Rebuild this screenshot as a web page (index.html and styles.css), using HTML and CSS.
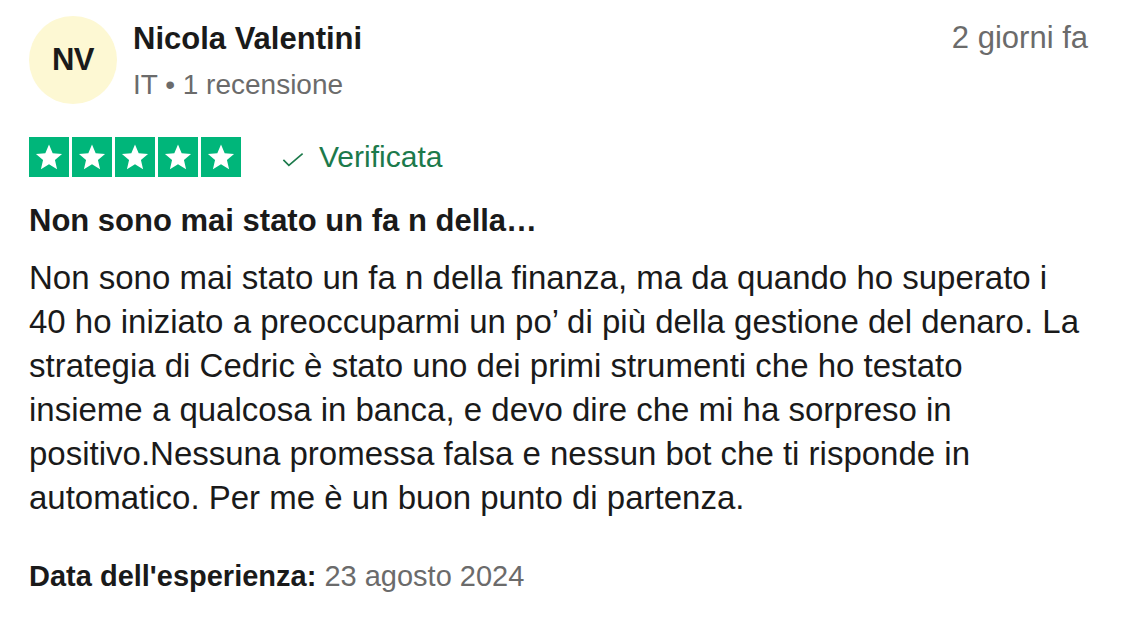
FILE: index.html
```html
<!DOCTYPE html>
<html lang="it">
<head>
<meta charset="utf-8">
<link rel="stylesheet" href="styles.css">
</head>
<body>
<article class="review">
  <header class="head">
    <div class="avatar">NV</div>
    <div class="who">
      <div class="name">Nicola Valentini</div>
      <div class="meta">IT • 1 recensione</div>
    </div>
    <time class="when">2 giorni fa</time>
  </header>
  <div class="rating">
    <div class="stars">
      <span class="star"><svg viewBox="0 0 24 24"><path d="M12 3.2l2.6 6.1 6.6.5-5 4.3 1.5 6.5L12 17.1l-5.7 3.5 1.5-6.5-5-4.3 6.6-.5z" fill="#fff"/></svg></span>
      <span class="star"><svg viewBox="0 0 24 24"><path d="M12 3.2l2.6 6.1 6.6.5-5 4.3 1.5 6.5L12 17.1l-5.7 3.5 1.5-6.5-5-4.3 6.6-.5z" fill="#fff"/></svg></span>
      <span class="star"><svg viewBox="0 0 24 24"><path d="M12 3.2l2.6 6.1 6.6.5-5 4.3 1.5 6.5L12 17.1l-5.7 3.5 1.5-6.5-5-4.3 6.6-.5z" fill="#fff"/></svg></span>
      <span class="star"><svg viewBox="0 0 24 24"><path d="M12 3.2l2.6 6.1 6.6.5-5 4.3 1.5 6.5L12 17.1l-5.7 3.5 1.5-6.5-5-4.3 6.6-.5z" fill="#fff"/></svg></span>
      <span class="star"><svg viewBox="0 0 24 24"><path d="M12 3.2l2.6 6.1 6.6.5-5 4.3 1.5 6.5L12 17.1l-5.7 3.5 1.5-6.5-5-4.3 6.6-.5z" fill="#fff"/></svg></span>
    </div>
    <div class="verified">
      <svg class="check" viewBox="0 0 24 16"><path d="M1.5 8.5l6 6L22.5 1.5" fill="none" stroke="#1c7a4b" stroke-width="1.8"/></svg>
      <span>Verificata</span>
    </div>
  </div>
  <h2 class="title">Non sono mai stato un fa n della…</h2>
  <p class="text">Non sono mai stato un fa n della finanza, ma da quando ho superato i 40 ho iniziato a preoccuparmi un po’ di più della gestione del denaro. La strategia di Cedric è stato uno dei primi strumenti che ho testato insieme a qualcosa in banca, e devo dire che mi ha sorpreso in positivo.Nessuna promessa falsa e nessun bot che ti risponde in automatico. Per me è un buon punto di partenza.</p>
  <p class="date"><b>Data dell'esperienza:</b> 23 agosto 2024</p>
</article>
</body>
</html>
```

FILE: styles.css
```css
html, body {
  margin: 0;
  background: #fff;
}
body {
  font-family: "Liberation Sans", Arial, sans-serif;
  color: #1a1a1a;
}
.review {
  padding: 16px 34px 0 29px;
}
.head {
  display: flex;
  align-items: flex-start;
}
.avatar {
  width: 88px;
  height: 88px;
  border-radius: 50%;
  background: #fdf8d3;
  display: flex;
  align-items: center;
  justify-content: center;
  font-weight: 700;
  font-size: 31px;
  color: #1a1a1a;
  letter-spacing: -0.5px;
  flex: none;
}
.who {
  flex: 1;
  margin-left: 16px;
  padding-top: 3px;
}
.name {
  font-weight: 700;
  font-size: 31px;
  line-height: 40px;
  color: #1a1a1a;
}
.meta {
  font-size: 28px;
  line-height: 40px;
  margin-top: 6px;
  color: #6b6b6b;
}
.when {
  font-size: 31px;
  line-height: 40px;
  color: #6b6b6b;
  padding-top: 2px;
}
.rating {
  display: flex;
  align-items: center;
  margin-top: 32px;
}
.stars {
  display: flex;
  gap: 3px;
}
.star {
  width: 40px;
  height: 40px;
  background: #00b67a;
  display: flex;
  align-items: center;
  justify-content: center;
}
.star svg {
  width: 34px;
  height: 34px;
}
.verified {
  display: flex;
  align-items: center;
  margin-left: 41px;
  color: #1c7a4b;
  font-size: 30px;
}
.check {
  width: 22px;
  height: 15px;
  margin-right: 15px;
  margin-top: 4px;
}
.title {
  margin: 22px 0 0;
  font-size: 31px;
  line-height: 44px;
  font-weight: 700;
  color: #1a1a1a;
}
.text {
  margin: 13px 0 0;
  font-size: 33px;
  line-height: 44px;
  color: #1a1a1a;
  max-width: 1051px;
}
.date {
  margin: 38px 0 0;
  font-size: 29px;
  line-height: 36px;
  color: #6b6b6b;
}
.date b {
  color: #1a1a1a;
}
```
